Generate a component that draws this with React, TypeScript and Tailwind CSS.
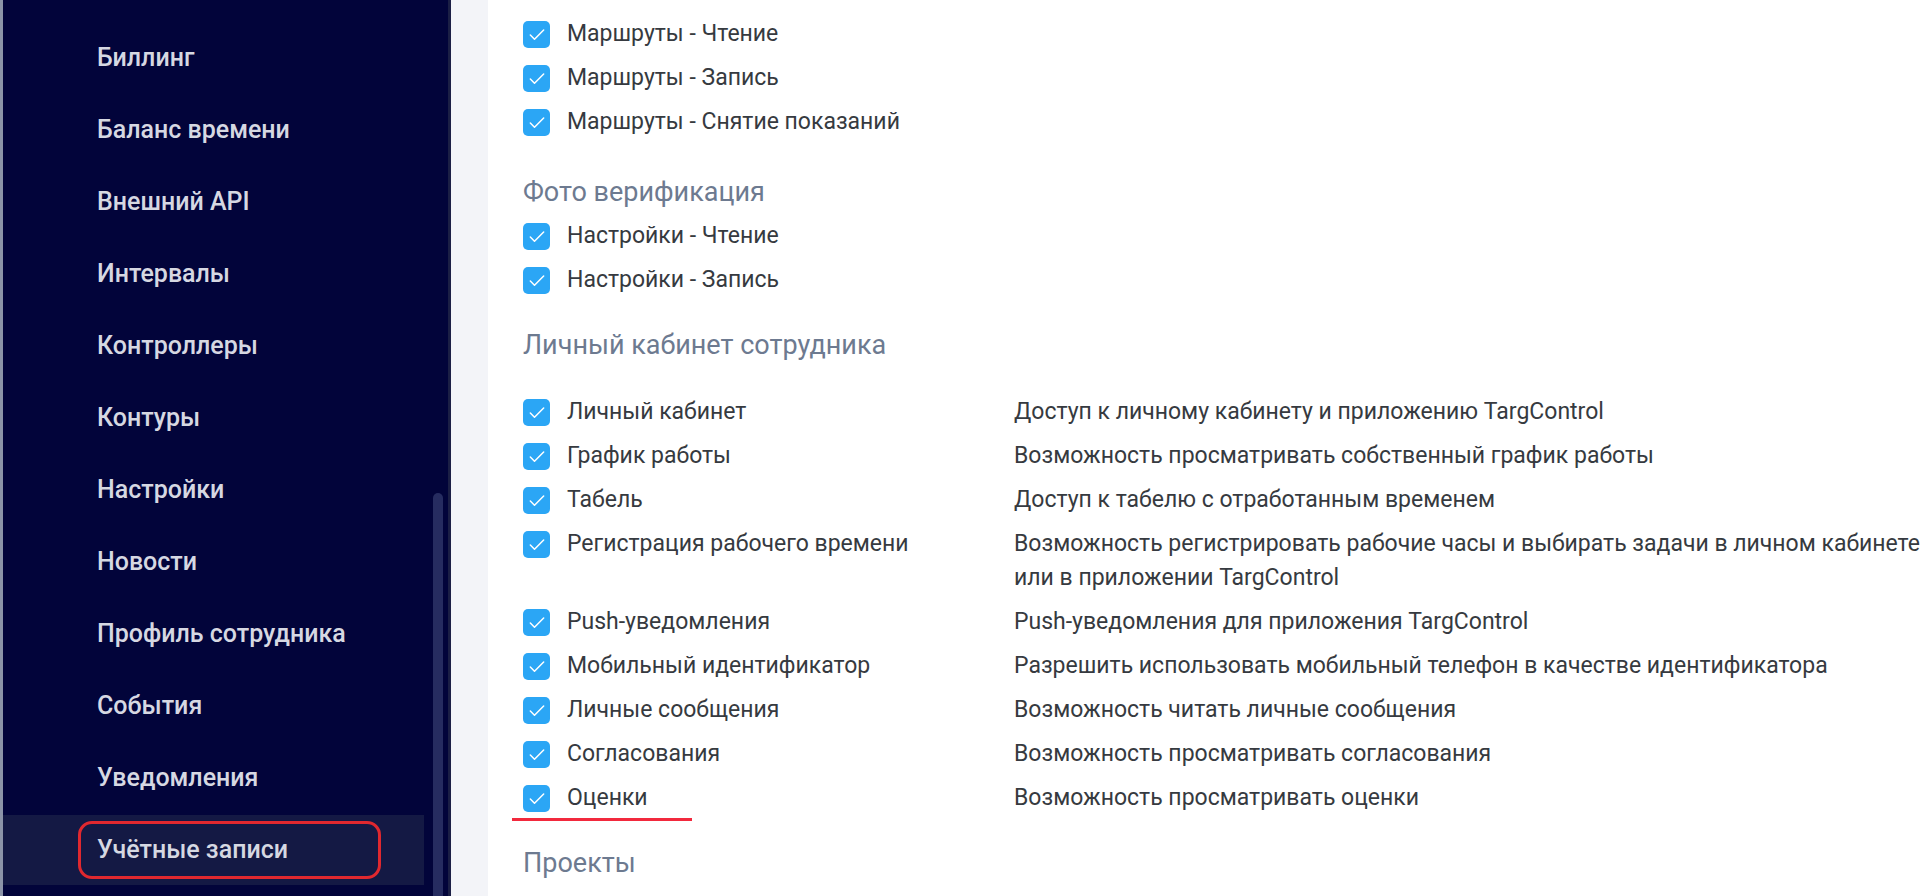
import { Check } from 'lucide-react';

const menu = [
  'Биллинг',
  'Баланс времени',
  'Внешний API',
  'Интервалы',
  'Контроллеры',
  'Контуры',
  'Настройки',
  'Новости',
  'Профиль сотрудника',
  'События',
  'Уведомления',
  'Учётные записи',
];

interface Perm {
  label: string;
  description?: string;
  underline?: boolean;
}

const routes: Perm[] = [
  { label: 'Маршруты - Чтение' },
  { label: 'Маршруты - Запись' },
  { label: 'Маршруты - Снятие показаний' },
];

const photo: Perm[] = [{ label: 'Настройки - Чтение' }, { label: 'Настройки - Запись' }];

const cabinet: Perm[] = [
  { label: 'Личный кабинет', description: 'Доступ к личному кабинету и приложению TargControl' },
  { label: 'График работы', description: 'Возможность просматривать собственный график работы' },
  { label: 'Табель', description: 'Доступ к табелю с отработанным временем' },
  {
    label: 'Регистрация рабочего времени',
    description: 'Возможность регистрировать рабочие часы и выбирать задачи в личном кабинете или в приложении TargControl',
  },
  { label: 'Push-уведомления', description: 'Push-уведомления для приложения TargControl' },
  { label: 'Мобильный идентификатор', description: 'Разрешить использовать мобильный телефон в качестве идентификатора' },
  { label: 'Личные сообщения', description: 'Возможность читать личные сообщения' },
  { label: 'Согласования', description: 'Возможность просматривать согласования' },
  { label: 'Оценки', description: 'Возможность просматривать оценки', underline: true },
];

function Checkbox() {
  return (
    <span className="mt-[4px] flex h-[27px] w-[27px] shrink-0 items-center justify-center rounded-[5px] bg-[#2ba6f5]">
      <Check size={20} strokeWidth={1.8} className="text-white" />
    </span>
  );
}

function PermRow({ perm }: { perm: Perm }) {
  return (
    <div className="relative flex py-[5px] leading-[34px]">
      <div className="flex w-[491px] shrink-0 items-start gap-[17px]">
        <Checkbox />
        <span>{perm.label}</span>
      </div>
      {perm.description && <p className="w-[925px] shrink-0">{perm.description}</p>}
      {/* annotation line under the last item */}
      {perm.underline && <span className="absolute -bottom-[1px] -left-[11px] h-[3px] w-[180px] bg-[#f2293d]" />}
    </div>
  );
}

function Heading({ children, className }: { children: string; className: string }) {
  return <h3 className={`text-[27px] leading-[44px] text-[#6d7a90] ${className}`}>{children}</h3>;
}

export default function App() {
  return (
    <div className="flex h-[896px] w-[1920px] overflow-hidden bg-white font-['Roboto','Liberation_Sans',sans-serif]">
      <aside className="relative h-full w-[451px] shrink-0 border-l-[3px] border-r-[3px] border-l-[#8c94a8] border-r-[#1b1f45] bg-[#02043a] pt-[22px]">
        {menu.map((item, i) => {
          const active = i === menu.length - 1;
          return (
            <div key={item} className="flex h-[72px] items-center py-[1px]">
              <div className={`flex h-full w-[421px] items-center ${active ? 'bg-[#141944] pl-[75px]' : 'pl-[94px]'}`}>
                <span
                  className={`text-[25px] font-medium text-[#d6d8e2] ${
                    active ? 'flex h-[58px] w-[303px] items-center rounded-[14px] border-[3px] border-[#e0282f] pl-[16px]' : ''
                  }`}
                >
                  {item}
                </span>
              </div>
            </div>
          );
        })}
        {/* scroll thumb */}
        <div className="absolute right-[5px] top-[493px] h-[420px] w-[10px] rounded-full bg-[#262c60]" />
      </aside>
      <div className="w-[37px] shrink-0 bg-[#f3f4f8]" />
      <main className="flex-1 pl-[35px] pt-[12px] text-[23px] text-[#363a40]">
        {routes.map((p) => (
          <PermRow key={p.label} perm={p} />
        ))}
        <Heading className="mt-[26px]">Фото верификация</Heading>
        {photo.map((p) => (
          <PermRow key={p.label} perm={p} />
        ))}
        <Heading className="mb-[23px] mt-[21px]">Личный кабинет сотрудника</Heading>
        {cabinet.map((p) => (
          <PermRow key={p.label} perm={p} />
        ))}
        <Heading className="mt-[21px]">Проекты</Heading>
      </main>
    </div>
  );
}
